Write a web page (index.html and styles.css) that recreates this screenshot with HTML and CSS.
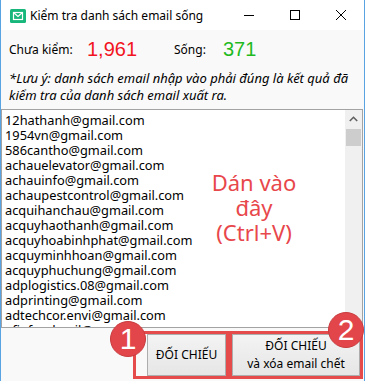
FILE: index.html
```html
<!DOCTYPE html>
<html>
<head>
    <title>Kiểm tra danh sách email sống</title>
    <link rel="stylesheet" href="styles.css">
</head>
<body>
    <div class="window">
        <div class="titlebar">
            <span class="app-icon">
                <svg width="16" height="14" viewBox="0 0 16 14">
                    <rect x="0" y="0" width="16" height="14" rx="1.5" fill="#17b67a"/>
                    <rect x="3.5" y="3.5" width="9" height="7" fill="none" stroke="#fff" stroke-width="1.2"/>
                    <path d="M3.5 3.5 L8 7.5 L12.5 3.5" fill="none" stroke="#fff" stroke-width="1.2"/>
                </svg>
            </span>
            <span class="title">Kiểm tra danh sách email sống</span>
            <div class="controls">
                <span class="ctl">
                    <svg width="10" height="10" viewBox="0 0 10 10"><path d="M0 5.5 H10" stroke="#000" stroke-width="1"/></svg>
                </span>
                <span class="ctl">
                    <svg width="10" height="10" viewBox="0 0 10 10"><rect x="0.5" y="0.5" width="9" height="9" fill="none" stroke="#000" stroke-width="1"/></svg>
                </span>
                <span class="ctl">
                    <svg width="10" height="10" viewBox="0 0 10 10"><path d="M0 0 L10 10 M10 0 L0 10" stroke="#000" stroke-width="1"/></svg>
                </span>
            </div>
        </div>

        <div class="client">
            <div class="stats">
                <span class="label label-wide">Chưa kiểm:</span>
                <span class="count count-red">1,961</span>
                <span class="label label-short">Sống:</span>
                <span class="count count-green">371</span>
            </div>

            <p class="note">*Lưu ý: danh sách email nhập vào phải đúng là kết quả đã kiểm tra của danh sách email xuất ra.</p>

            <div class="list-box">
                <div class="lines">
                    <div>12hathanh@gmail.com</div>
                    <div>1954vn@gmail.com</div>
                    <div>586cantho@gmail.com</div>
                    <div>achauelevator@gmail.com</div>
                    <div>achauinfo@gmail.com</div>
                    <div>achaupestcontrol@gmail.com</div>
                    <div>acquihanchau@gmail.com</div>
                    <div>acquyhaothanh@gmail.com</div>
                    <div>acquyhoabinhphat@gmail.com</div>
                    <div>acquyminhhoan@gmail.com</div>
                    <div>acquyphuchung@gmail.com</div>
                    <div>adplogistics.08@gmail.com</div>
                    <div>adprinting@gmail.com</div>
                    <div>adtechcor.envi@gmail.com</div>
                    <div>afinfoodmail@gmail.com</div>
                </div>
                <div class="scrollbar">
                    <div class="arrow">
                        <svg width="9" height="6" viewBox="0 0 9 6"><path d="M0.8 5 L4.5 1.3 L8.2 5" fill="none" stroke="#606060" stroke-width="1.6"/></svg>
                    </div>
                    <div class="thumb"></div>
                </div>
                <div class="hint">Dán vào<br>đây<br>(Ctrl+V)</div>
            </div>

            <div class="actions">
                <div class="mark mark-one">
                    <button type="button" class="btn btn-one">ĐỐI CHIẾU</button>
                    <span class="badge badge-one">1</span>
                </div>
                <div class="mark mark-two">
                    <button type="button" class="btn btn-two">ĐỐI CHIẾU<br>và xóa email chết</button>
                    <span class="badge badge-two">2</span>
                </div>
            </div>
        </div>
    </div>
</body>
</html>
```

FILE: styles.css
```css
body {
    margin: 0;
    font-family: "Noto Sans", "Open Sans", sans-serif;
    font-size: 12px;
    color: #000;
    background-color: #f9f9f9;
}
.window {
    width: 365px;
    height: 381px;
    box-sizing: border-box;
    border-left: 1px solid #5aa3e3;
    border-right: 1px solid #5aa3e3;
    background-color: #f9f9f9;
    overflow: hidden;
}
.titlebar {
    height: 30px;
    background-color: #fff;
    display: flex;
    align-items: center;
}
.app-icon {
    display: flex;
    margin-left: 9px;
    margin-top: 1px;
}
.title {
    margin-left: 4px;
    font-size: 12px;
    white-space: nowrap;
}
.controls {
    margin-left: auto;
    display: flex;
    height: 30px;
}
.ctl {
    width: 46px;
    display: flex;
    align-items: center;
    justify-content: center;
}
.client {
    display: flex;
    flex-direction: column;
}
.stats {
    height: 22px;
    margin-top: 8px;
    padding-left: 8px;
    display: flex;
    align-items: center;
}
.label {
    font-size: 12px;
}
.label-wide {
    width: 78px;
}
.label-short {
    width: 49px;
}
.count {
    font-family: "Liberation Sans", Arial, sans-serif;
    font-size: 20px;
}
.count-red {
    width: 87px;
    color: #f2141e;
}
.count-green {
    color: #1fba1f;
}
.note {
    margin: 10px 0 0 0;
    padding: 0 8px;
    font-style: italic;
    font-size: 13px;
    line-height: 17px;
}
.list-box {
    position: relative;
    margin-top: 5px;
    width: 362px;
    height: 219px;
    box-sizing: border-box;
    border: 1px solid #a3a3a3;
    background-color: #fff;
    display: flex;
    overflow: hidden;
}
.lines {
    flex: 1;
    padding: 3px 0 0 3px;
    font-size: 12.8px;
    line-height: 15px;
    white-space: nowrap;
    overflow: hidden;
}
.scrollbar {
    width: 17px;
    background-color: #f0f0f0;
    display: flex;
    flex-direction: column;
}
.arrow {
    height: 18px;
    display: flex;
    align-items: center;
    justify-content: center;
}
.thumb {
    margin: 1px 1px 0 1px;
    height: 17px;
    background-color: #cdcdcd;
}
.hint {
    position: absolute;
    left: 191px;
    top: 60px;
    width: 122px;
    text-align: center;
    color: #e8474b;
    font-size: 22px;
    line-height: 25px;
}
.actions {
    margin-top: 3px;
    padding-right: 1px;
    display: flex;
    justify-content: flex-end;
}
.mark {
    position: relative;
    height: 48px;
    box-sizing: border-box;
    border: 3px solid #e64b4c;
    display: flex;
}
.mark-one {
    width: 96px;
    padding-left: 11px;
}
.mark-two {
    width: 134px;
}
.btn {
    height: 42px;
    margin: 0;
    padding: 0;
    border: 1px solid #adadad;
    background: linear-gradient(#f3f3f3, #e6e6e6);
    font-family: "Noto Sans", "Open Sans", sans-serif;
    font-size: 12px;
    line-height: 18px;
    color: #000;
}
.btn-one {
    width: 79px;
}
.btn-two {
    width: 128px;
}
.badge {
    position: absolute;
    width: 36px;
    height: 36px;
    box-sizing: border-box;
    border-radius: 50%;
    background-color: #e3464a;
    border: 1px solid #c83b3e;
    color: #fff;
    font-family: "Liberation Sans", Arial, sans-serif;
    font-size: 30px;
    line-height: 34px;
    text-align: center;
}
.badge-one {
    left: -26px;
    top: -13px;
}
.badge-two {
    left: 96px;
    top: -22px;
}
```
